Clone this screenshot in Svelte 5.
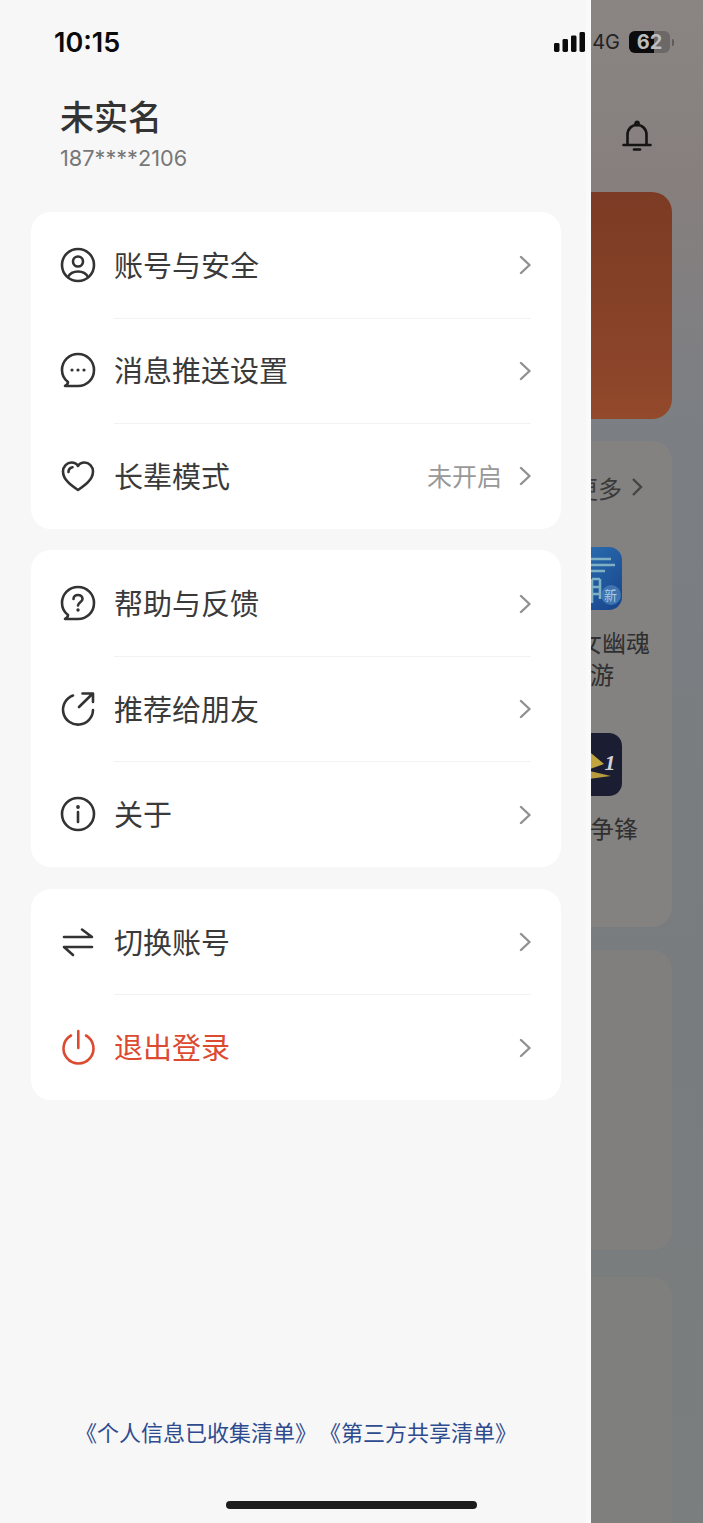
<script>
	const groups = [
		[
			{ icon: 'user', label: '账号与安全' },
			{ icon: 'message', label: '消息推送设置' },
			{ icon: 'heart', label: '长辈模式', value: '未开启' }
		],
		[
			{ icon: 'help', label: '帮助与反馈' },
			{ icon: 'share', label: '推荐给朋友' },
			{ icon: 'info', label: '关于' }
		],
		[
			{ icon: 'swap', label: '切换账号' },
			{ icon: 'power', label: '退出登录', danger: true }
		]
	];
</script>

{#snippet bubble()}
	<path d="M18 34C27 34 34 27 34 18S27 2 18 2 2 9 2 18C2 23 4 27 8 30 8 32 7 33 5 34H18Z" />
{/snippet}

{#snippet icon(name)}
	<svg class="icon" viewBox="0 0 36 36" width="36" height="36" aria-hidden="true">
		{#if name === 'user'}
			<circle cx="18" cy="18" r="16" />
			<circle cx="18" cy="14.5" r="5" />
			<path d="M8 30C10 26 14 24.5 18 24.5S26 26 28 30" />
		{:else if name === 'message'}
			{@render bubble()}
			<circle class="fill" cx="12" cy="18" r="1.6" />
			<circle class="fill" cx="18" cy="18" r="1.6" />
			<circle class="fill" cx="24" cy="18" r="1.6" />
		{:else if name === 'heart'}
			<path d="M18 32C12 28 3 22 3 13.5 3 8.5 7 4.5 11.5 4.5 14.5 4.5 16.8 6 18 8 19.2 6 21.5 4.5 24.5 4.5 29 4.5 33 8.5 33 13.5 33 22 24 28 18 32Z" />
			<path d="M8.5 14C8.5 11.5 10 9.8 12.5 9.3" />
		{:else if name === 'help'}
			{@render bubble()}
			<path d="M13.5 14C13.5 11.5 15.5 10 18 10S22.5 11.5 22.5 14C22.5 17 18 17.5 18 20.5" />
			<circle class="fill" cx="18" cy="25" r="1.7" />
		{:else if name === 'share'}
			<path d="M13 4.5A15 15 0 1 0 33 19" />
			<path d="M19 16L32.5 2.8M22.5 2.5H33V11" />
		{:else if name === 'info'}
			<circle cx="18" cy="18" r="16" />
			<circle class="fill" cx="18" cy="11" r="1.9" />
			<path d="M18 16V26" />
		{:else if name === 'swap'}
			<path d="M4 13H32L22 5.5" />
			<path d="M32 23H4L13 31" />
		{:else if name === 'power'}
			<path d="M11 6.5A15 15 0 1 0 26 6.5" />
			<path d="M18.3 2V19" />
		{/if}
	</svg>
{/snippet}

<div class="screen">
	<!-- page behind the drawer, dimmed -->
	<div class="page">
		<div class="page-head">
			<svg class="bell" viewBox="0 0 30 32" width="30" height="32" aria-hidden="true">
				<path d="M1.5 25H28.5M5.5 25V15C5.5 9 9.5 5 15 5S24.5 9 24.5 15V25" />
				<circle cx="15" cy="3.5" r="1.6" />
				<path d="M12 29.5H18" />
			</svg>
		</div>
		<div class="banner"></div>
		<div class="panel apps">
			<div class="more">
				<span>更多</span>
				<svg viewBox="0 0 12 20" width="12" height="20" aria-hidden="true"><path d="M2 2L10 10 2 18" /></svg>
			</div>
			<div class="app">
				<div class="app-icon blue">
					<svg viewBox="0 0 63 63" width="63" height="63" aria-hidden="true">
						<path d="M20 12H52M24 18H56M20 24H46M33 32V56M41 32V52M33 32H41M33 40H41M33 47H41" fill="none" stroke="#7fb0c4" stroke-width="2.6" />
					</svg>
					<span class="badge">新</span>
				</div>
				<span class="app-name">新倩女幽魂手游</span>
			</div>
			<div class="app">
				<div class="app-icon navy">
					<svg viewBox="0 0 63 63" width="63" height="63" aria-hidden="true">
						<path d="M20 10L45 31 20 40Z" fill="#c2a53f" />
						<path d="M22 36L52 43 22 47Z" fill="#b89b3c" />
					</svg>
					<span class="rank">1</span>
				</div>
				<span class="app-name">极速争锋</span>
			</div>
		</div>
		<div class="panel tall"></div>
		<div class="panel last"></div>
	</div>

	<aside class="drawer">
		<header class="profile">
			<h1>未实名</h1>
			<p>187****2106</p>
		</header>

		{#each groups as rows}
			<ul class="group">
				{#each rows as row}
					<li class="row" class:danger={row.danger}>
						{@render icon(row.icon)}
						<div class="row-main">
							<span class="label">{row.label}</span>
							{#if row.value}
								<span class="value">{row.value}</span>
							{/if}
							<svg class="chevron" viewBox="0 0 12 20" width="12" height="20" aria-hidden="true"><path d="M2 2L10.5 10 2 18" /></svg>
						</div>
					</li>
				{/each}
			</ul>
		{/each}

		<footer class="links">
			<span>《个人信息已收集清单》</span>
			<span>《第三方共享清单》</span>
		</footer>
		<div class="home"></div>
	</aside>

	<div class="status">
		<span class="time">10:15</span>
		<div class="indicators">
			<svg viewBox="0 0 32 20" width="32" height="20" aria-hidden="true">
				<rect x="0" y="11" width="5.5" height="9" rx="1.4" />
				<rect x="8.5" y="7" width="5.5" height="13" rx="1.4" />
				<rect x="17" y="3.5" width="5.5" height="16.5" rx="1.4" />
				<rect x="25.5" y="0" width="5.5" height="20" rx="1.4" />
			</svg>
			<span class="net">4G</span>
			<div class="battery">
				<div class="level" style="width: 62%"></div>
				<span>62</span>
			</div>
			<div class="nub"></div>
		</div>
	</div>
</div>

<style>
	:global(body) {
		margin: 0;
		font-family: "Noto Sans CJK SC", "Noto Sans", sans-serif;
	}

	ul,
	h1,
	p {
		margin: 0;
		padding: 0;
	}

	.screen {
		position: relative;
		width: 703px;
		height: 1523px;
		overflow: hidden;
	}

	.page {
		display: flex;
		flex-direction: column;
		align-items: flex-end;
		height: 100%;
		padding-right: 31px;
		box-sizing: border-box;
		background: linear-gradient(180deg, #8a8583 0, #867f7e 190px, #7b7f84 430px, #787c7e 1000px, #7a7e7e 100%);
	}

	.page-head {
		display: flex;
		justify-content: flex-end;
		height: 192px;
		width: 100%;
	}

	.bell {
		margin: 120px 20px 0 0;
		fill: none;
		stroke: #161412;
		stroke-width: 2.6;
		stroke-linecap: round;
	}

	.banner {
		width: 240px;
		height: 227px;
		border-radius: 20px;
		background: linear-gradient(180deg, #7c3b24 0, #8a4429 70%, #93492b 100%);
	}

	.panel {
		width: 240px;
		border-radius: 20px;
		background: #838281;
	}

	.apps {
		height: 486px;
		margin-top: 22px;
		padding-top: 30px;
		box-sizing: border-box;
	}

	.more {
		display: flex;
		justify-content: flex-end;
		align-items: center;
		gap: 9px;
		height: 32px;
		padding-right: 29px;
		font-size: 24px;
		color: #3a3a3a;
	}

	.more svg {
		fill: none;
		stroke: #444;
		stroke-width: 2.4;
	}

	.app {
		display: flex;
		flex-direction: column;
		align-items: center;
		width: 120px;
		height: 186px;
		margin-left: 98px;
		font-size: 24px;
		line-height: 32px;
		color: #2f2f2f;
		text-align: center;
	}

	.more + .app {
		margin-top: 44px;
	}

	.app-icon {
		position: relative;
		flex: none;
		width: 63px;
		height: 63px;
		margin-bottom: 16px;
		border-radius: 13px;
		overflow: hidden;
	}

	.blue {
		background: linear-gradient(135deg, #2f78b8, #17438c);
	}

	.navy {
		background: #1b1e33;
	}

	.badge {
		position: absolute;
		right: 1px;
		bottom: 5px;
		width: 20px;
		height: 20px;
		border-radius: 50%;
		background: #3f74b0;
		color: #a8cbe4;
		font-size: 13px;
		line-height: 20px;
	}

	.rank {
		position: absolute;
		right: 6px;
		top: 14px;
		font: italic 700 22px/32px "Liberation Serif", serif;
		color: #cfd2d8;
	}

	.app-name {
		width: 120px;
	}

	.tall {
		height: 300px;
		margin-top: 23px;
		background: #807f7e;
	}

	.last {
		flex: 1;
		margin-top: 27px;
		background: #7f7f7e;
		border-radius: 20px 20px 0 0;
	}

	.drawer {
		position: absolute;
		left: 0;
		top: 0;
		display: flex;
		flex-direction: column;
		width: 591px;
		height: 100%;
		padding: 94px 25px 14px 31px;
		box-sizing: border-box;
		background: #f7f7f7;
		border-right: 5px solid #fafafa;
	}

	.profile {
		height: 118px;
		padding-left: 29px;
	}

	h1 {
		font-size: 34px;
		line-height: 44px;
		font-weight: 500;
		color: #333;
	}

	.profile p {
		font-family: Inter, "Liberation Sans", sans-serif;
		font-size: 21.7px;
		line-height: 28px;
		margin-top: 6px;
		color: #777;
	}

	.group {
		list-style: none;
		background: #fff;
		border-radius: 20px;
		margin-bottom: 21.9px;
	}

	.row {
		display: flex;
		align-items: center;
		height: 105.5px;
		padding: 0 30px 0 29px;
		color: #3a3a3a;
	}

	.row-main {
		display: flex;
		align-items: center;
		flex: 1;
		height: 100%;
		margin-left: 18px;
		box-sizing: border-box;
		border-top: 1px solid #f2f2f2;
	}

	.row:first-child .row-main {
		border-top-color: transparent;
	}

	.icon {
		flex: none;
		fill: none;
		stroke: #333;
		stroke-width: 2.6;
		stroke-linecap: round;
		stroke-linejoin: round;
	}

	.icon .fill {
		fill: #333;
		stroke: none;
	}

	.danger {
		color: #dc4a30;
	}

	.danger .icon {
		stroke: #dc4a30;
	}

	.label {
		flex: 1;
		padding-bottom: 3px;
		font-size: 29px;
		line-height: 40px;
	}

	.value {
		margin-right: 17px;
		padding-bottom: 3px;
		font-size: 25px;
		color: #999;
	}

	.chevron {
		flex: none;
		fill: none;
		stroke: #909090;
		stroke-width: 2.4;
		stroke-linecap: round;
		stroke-linejoin: round;
	}

	.links {
		display: flex;
		justify-content: center;
		gap: 2px;
		margin-top: auto;
		font-size: 22px;
		line-height: 30px;
		color: #2e4b8f;
		white-space: nowrap;
	}

	.home {
		flex: none;
		width: 251px;
		height: 8px;
		margin: 55px 0 0 195px;
		border-radius: 4px;
		background: #1c1c1c;
	}

	.status {
		position: absolute;
		left: 54px;
		right: 29px;
		top: 24px;
		display: flex;
		justify-content: space-between;
		align-items: center;
		height: 36px;
	}

	.time {
		font-family: Inter, "Liberation Sans", sans-serif;
		font-size: 27px;
		font-weight: 600;
		color: #0a0a0a;
	}

	.indicators {
		display: flex;
		align-items: center;
		fill: #0c0c0c;
	}

	.net {
		margin: 0 9px 0 6px;
		font-family: Inter, "Liberation Sans", sans-serif;
		font-size: 20px;
		color: #222;
	}

	.battery {
		position: relative;
		display: flex;
		justify-content: center;
		align-items: center;
		width: 41px;
		height: 22px;
		border-radius: 6px;
		background: #6b6867;
		overflow: hidden;
	}

	.level {
		position: absolute;
		left: 0;
		top: 0;
		height: 100%;
		background: #0b0b0b;
	}

	.battery span {
		position: relative;
		font-family: Inter, "Liberation Sans", sans-serif;
		font-size: 20px;
		font-weight: 700;
		color: #bdbdbd;
	}

	.nub {
		width: 2px;
		height: 7px;
		margin-left: 2px;
		border-radius: 0 2px 2px 0;
		background: #5d5b5a;
	}
</style>
